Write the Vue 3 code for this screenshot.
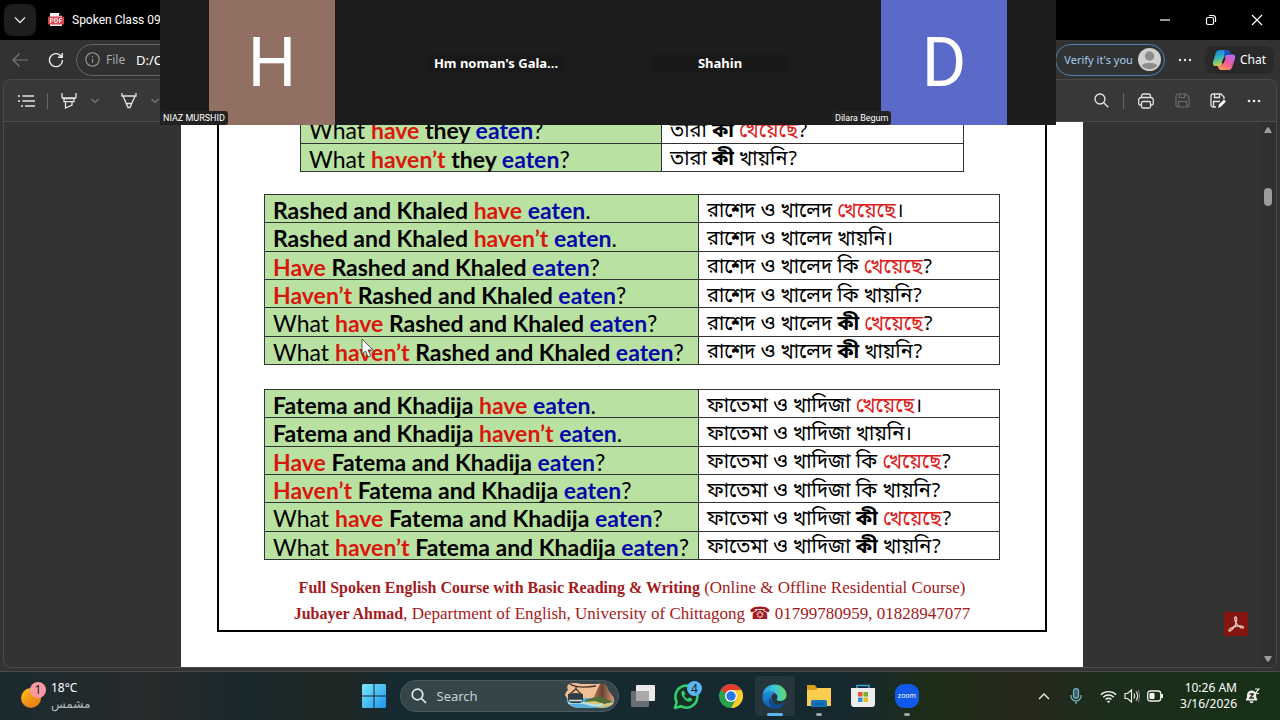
<script setup>
const tokens = {
  h: ['have', 'red'],
  H: ['Have', 'red'],
  n: ['haven’t', 'red'],
  N: ['Haven’t', 'red'],
  e: ['eaten', 'blue'],
}

function english(pattern, subject) {
  return pattern.split(' ').map((key) => {
    if (key === 'S') return { text: subject + ' ', tone: 'strong' }
    if (key === 'W') return { text: 'What ', tone: '' }
    if (key === '.' || key === '?') return { text: key, tone: '' }
    const [text, tone] = tokens[key]
    return { text: text + (key === 'e' ? '' : ' '), tone: 'strong ' + tone }
  })
}

function bangla(pattern, subject) {
  const words = { e: ['খেয়েছে', 'crimson'], n: ['খায়নি', ''], i: ['কি ', ''], I: ['কী ', 'strong'], '|': ['।', ''], '?': ['?', ''] }
  return [{ text: subject + ' ', tone: '' }].concat(
    pattern.split(' ').map((key) => ({ text: words[key][0], tone: words[key][1] }))
  )
}

const patterns = [
  ['S h e .', 'e |'],
  ['S n e .', 'n |'],
  ['H S e ?', 'i e ?'],
  ['N S e ?', 'i n ?'],
  ['W h S e ?', 'I e ?'],
  ['W n S e ?', 'I n ?'],
]

const build = (en, bn, list) => list.map(([a, b]) => ({ en: english(a, en), bn: bangla(b, bn) }))

const tables = [
  { id: 'they', kind: 'narrow', rows: build('they', 'তারা', patterns.slice(4)) },
  { id: 'rashed', kind: 'wide', rows: build('Rashed and Khaled', 'রাশেদ ও খালেদ', patterns) },
  { id: 'fatema', kind: 'wide', rows: build('Fatema and Khadija', 'ফাতেমা ও খাদিজা', patterns) },
]
</script>

<template>
  <div class="desktop">
    <header class="titlebar">
      <button class="tab-menu" aria-label="Tab actions">
        <svg width="14" height="10" viewBox="0 0 14 10"><path d="M2 2.5l5 5 5-5" fill="none" stroke="#ddd" stroke-width="1.4" /></svg>
      </button>
      <div class="tab">
        <svg width="16" height="16" viewBox="0 0 16 16">
          <path d="M2 1h9l3 3v10H2z" fill="#f4eeee" />
          <path d="M11 1l3 3h-3z" fill="#222" />
          <rect x="0" y="4.500" width="16" height="8" rx="1" fill="#dc4850" />
          <path d="M2.500 11V6.500h1.300a1.200 1.200 0 0 1 0 2.400H2.500M6.800 6.500V10.600h.8a2 2 0 0 0 0-4.100zM11.500 11V6.500H14M11.500 8.700h2" fill="none" stroke="#fff" stroke-width="1" />
        </svg>
        <span>Spoken Class 09</span>
      </div>
      <div class="window-controls">
        <button aria-label="Minimize"><svg width="12" height="12" viewBox="0 0 12 12"><path d="M1 6h10" stroke="#fff" stroke-width="1.200" /></svg></button>
        <button aria-label="Restore"><svg width="12" height="12" viewBox="0 0 12 12" fill="none" stroke="#fff" stroke-width="1.200"><rect x="1.500" y="3.500" width="7" height="7" rx="1.500" /><path d="M4 1.500h4a2.500 2.500 0 0 1 2.500 2.500v4" /></svg></button>
        <button aria-label="Close"><svg width="12" height="12" viewBox="0 0 12 12"><path d="M1 1l10 10M11 1L1 11" stroke="#fff" stroke-width="1.300" /></svg></button>
      </div>
    </header>

    <nav class="address-row">
      <button class="icon-btn" aria-label="Back">
        <svg width="18" height="16" viewBox="0 0 18 16" fill="none" stroke="#777" stroke-width="1.200"><path d="M17 8H2M8.500 1.500L2 8l6.500 6.500" /></svg>
      </button>
      <button class="icon-btn" aria-label="Reload">
        <svg width="16" height="16" viewBox="0 0 16 16" fill="none" stroke="#eee" stroke-width="1.400"><path d="M14.500 8A6.500 6.500 0 1 1 12.500 3.400L14 5M14.200 1v4.200H10" /></svg>
      </button>
      <div class="address">
        <svg width="15" height="15" viewBox="0 0 15 15" fill="none" stroke="#999" stroke-width="1.100"><circle cx="7.500" cy="7.500" r="6.700" /><path d="M7.500 6.700v4M7.500 4v1.300" /></svg>
        <label for="url">File</label>
        <input id="url" type="text" value="D:/C" />
      </div>
      <div class="profile-area">
        <button class="verify">
          <span>Verify it's you</span>
          <svg width="23" height="23" viewBox="0 0 23 23"><circle cx="11.500" cy="11.500" r="11.500" fill="#d2d0ce" /><circle cx="11.500" cy="8" r="4.700" fill="#8f8c8a" /><path d="M4 17.500c0-3.500 15-3.500 15 0-2 5-13 5-15 0z" fill="#8f8c8a" /></svg>
        </button>
        <button class="icon-btn more" aria-label="Settings and more">
          <svg width="14" height="4" viewBox="0 0 14 4" fill="#e8e8e8"><circle cx="2" cy="2" r="1.200" /><circle cx="7" cy="2" r="1.200" /><circle cx="12" cy="2" r="1.200" /></svg>
        </button>
        <button class="chat">
          <svg width="24" height="22" viewBox="0 0 24 22">
            <defs>
              <linearGradient id="cop-a" x1="0" y1="0" x2="0.300" y2="1"><stop offset="0" stop-color="#1976e0" /><stop offset="0.500" stop-color="#28b6c4" /><stop offset="1" stop-color="#c9d43b" /></linearGradient>
              <linearGradient id="cop-b" x1="0.800" y1="0" x2="0.200" y2="1"><stop offset="0" stop-color="#b96af0" /><stop offset="0.500" stop-color="#ee5aa0" /><stop offset="1" stop-color="#ff9a4a" /></linearGradient>
            </defs>
            <path d="M7 1h8c2 0 2.500 1.500 3 3l.8 2H15c-2 0-2.500 1-3 3l-2 6c-.5 1.500-1.500 2-3 2H3.500C1 17 .5 15 1 13L4 3.500C4.500 2 5.500 1 7 1z" fill="url(#cop-a)" />
            <path d="M17 21H9c-2 0-2.500-1.500-3-3l-.5-1.500H8c2 0 2.500-1 3-2.500l2-6c.5-1.500 1.500-2.500 3-2.500h4.500c2.500 0 3 2 2.500 4L20 18.500C19.500 20 18.500 21 17 21z" fill="url(#cop-b)" />
            <path d="M12.500 1H15c2 0 2.500 1.500 3 3l.8 2H15c-1.800 0-2.400.8-2.900 2.300z" fill="#1c4fc4" />
            <path d="M13 8.500l-2.500 5.500" stroke="#292929" stroke-width="2" />
          </svg>
          <span>Chat</span>
        </button>
      </div>
    </nav>

    <main class="viewer">
      <div class="pdf-bar">
        <div class="pdf-tools left">
          <button class="icon-btn" aria-label="Contents">
            <svg width="17" height="14" viewBox="0 0 17 14" fill="none" stroke="#e4e4e4" stroke-width="1.400"><path d="M4.500 2H16M4.500 7H17M7 12h10M0 2h2M0 7h2M3 12h2" /></svg>
          </button>
          <i class="rule"></i>
          <button class="icon-btn" aria-label="Highlight">
            <svg width="16" height="18" viewBox="0 0 16 18" fill="none" stroke="#e4e4e4" stroke-width="1.300"><path d="M1 1v3.500C1 6 2 6.500 3 6.500h10c1 0 2-.5 2-2V1M2 6h12M3 6.500v3.200h10V6.500M4.500 10v6l6.500-3v-3" /></svg>
          </button>
          <button class="icon-btn small" aria-label="Highlight colours"><svg width="8" height="6" viewBox="0 0 8 6"><path d="M.5 1L4 4.500 7.500 1" fill="none" stroke="#aaa" /></svg></button>
          <button class="icon-btn draw" aria-label="Draw">
            <svg width="16" height="18" viewBox="0 0 16 18" fill="none" stroke="#e4e4e4" stroke-width="1.300"><path d="M1 1v3h14V1M2 4l5 11.500h2L14 4M5.500 11.500h5" /></svg>
          </button>
          <button class="icon-btn small" aria-label="Pen options"><svg width="8" height="6" viewBox="0 0 8 6"><path d="M.5 1L4 4.500 7.500 1" fill="none" stroke="#aaa" /></svg></button>
        </div>
        <div class="pdf-tools">
          <button class="icon-btn" aria-label="Find">
            <svg width="15" height="15" viewBox="0 0 15 15" fill="none" stroke="#e4e4e4" stroke-width="1.300"><circle cx="6" cy="6" r="5" /><path d="M9.700 9.700L14.300 14.300" /></svg>
          </button>
          <i class="rule"></i>
          <button class="icon-btn" aria-label="Print">
            <svg width="16" height="16" viewBox="0 0 16 16" fill="none" stroke="#e4e4e4" stroke-width="1.300"><path d="M3.500 4.500V3A2 2 0 0 1 5.500 1h5a2 2 0 0 1 2 2v1.500M3.500 12H2.200Q.7 12 .7 10.500V7A2.500 2.500 0 0 1 3.200 4.500h9.600A2.500 2.500 0 0 1 15.300 7v3.500q0 1.500-1.500 1.500h-1.300" /><rect x="3.500" y="8.500" width="9" height="6.500" rx="1.500" /></svg>
          </button>
          <button class="icon-btn" aria-label="Save" disabled>
            <svg width="15" height="15" viewBox="0 0 15 15" fill="none" stroke="#6b6b6b" stroke-width="1.200"><path d="M3 1h8l3 3v8a2 2 0 0 1-2 2H3a2 2 0 0 1-2-2V3a2 2 0 0 1 2-2zM4.500 1v3.500h5V1M3.500 14V8.500h8V14" /></svg>
          </button>
          <button class="icon-btn" aria-label="Save as">
            <svg width="16" height="16" viewBox="0 0 16 16" fill="none" stroke="#e4e4e4" stroke-width="1.300"><path d="M6 14H3a2 2 0 0 1-2-2V3a2 2 0 0 1 2-2h8l3 3v2M4.500 1v3.500h5V1M3.500 14V8.500H10" /><path d="M8 15l1-3.500 5-5 2 2-5 5z" fill="#fff" stroke="none" /></svg>
          </button>
          <button class="icon-btn" aria-label="More options">
            <svg width="14" height="4" viewBox="0 0 14 4" fill="#e8e8e8"><circle cx="2" cy="2" r="1.300" /><circle cx="7" cy="2" r="1.300" /><circle cx="12" cy="2" r="1.300" /></svg>
          </button>
        </div>
      </div>

      <div class="pdf-body">
        <div class="canvas">
          <article class="page">
            <div class="frame">
              <table v-for="t in tables" :key="t.id" :class="t.kind">
                <tbody>
                  <tr v-for="(row, i) in t.rows" :key="i">
                    <td class="en"><span v-for="(s, j) in row.en" :key="j" :class="s.tone">{{ s.text }}</span></td>
                    <td class="bn" lang="bn"><span v-for="(s, j) in row.bn" :key="j" :class="s.tone">{{ s.text }}</span></td>
                  </tr>
                </tbody>
              </table>
              <footer class="credits">
                <p><b>Full Spoken English Course with Basic Reading &amp; Writing</b> (Online &amp; Offline Residential Course)</p>
                <p><b>Jubayer Ahmad</b>, Department of English, University of Chittagong <span class="phone">☎</span> 01799780959, 01828947077</p>
              </footer>
            </div>
          </article>
          <button class="acrobat" aria-label="Open in Acrobat">
            <svg width="24" height="24" viewBox="0 0 24 24"><rect width="24" height="24" rx="1" fill="#85150f" /><path d="M11.500 5c1.800 0 1.200 4 0 7.500C9.500 17 6 20 5 18.800c-.8-1.500 4-4.300 8-4.800 3.500-.5 7 .2 6.500 1.500-.8 1.700-5-.8-7-4C10.500 8.500 10 5 11.500 5z" fill="none" stroke="#e5c9c2" stroke-width="1.300" /></svg>
          </button>
        </div>
        <div class="scrollbar">
          <svg width="10" height="8" viewBox="0 0 10 8"><path d="M1 7L4 1.500h2L9 7z" fill="#9b9b9b" /></svg>
          <i class="thumb"></i>
          <svg class="down" width="10" height="8" viewBox="0 0 10 8"><path d="M1 1l3 5.500h2L9 1z" fill="#9b9b9b" /></svg>
        </div>
      </div>
    </main>

    <footer class="taskbar">
      <button class="weather">
        <svg width="26" height="28" viewBox="0 0 26 28">
          <defs><linearGradient id="sun" x1="0" y1="0" x2="0.700" y2="1"><stop offset="0" stop-color="#ffc01e" /><stop offset="1" stop-color="#ea7a12" /></linearGradient></defs>
          <circle cx="10" cy="16" r="10" fill="url(#sun)" /><circle cx="17" cy="8" r="8" fill="#f99aa2" />
          <text x="17" y="12" text-anchor="middle" class="badge-text">1</text>
        </svg>
        <span class="weather-text"><span>18°C</span><span class="condition" lang="ar">مشمس</span></span>
      </button>

      <div class="apps">
        <button class="app" aria-label="Start">
          <svg width="24" height="24" viewBox="0 0 24 24">
            <defs><linearGradient id="win" x1="0" y1="0" x2="1" y2="1"><stop offset="0" stop-color="#7de6fb" /><stop offset="1" stop-color="#1b95ee" /></linearGradient></defs>
            <path d="M1 0h10.500v11.500H0V1zM12.500 0H23l1 1v10.500H12.500zM0 12.500h11.500V24H1l-1-1zM12.500 12.500H24V23l-1 1H12.500z" fill="url(#win)" />
          </svg>
        </button>
        <div class="search">
          <svg width="16" height="16" viewBox="0 0 16 16" fill="none" stroke="#e6eaea" stroke-width="1.700"><circle cx="6.500" cy="6.500" r="5.300" /><path d="M10.500 10.500L15 15" /></svg>
          <input type="text" placeholder="Search" aria-label="Search" />
          <svg width="50" height="26" viewBox="0 0 50 26">
            <defs>
              <clipPath id="scene"><path d="M4 1q5-2 12 0h16q8-1 10 3 1 4 4 7 4 4 3 8-2 5-10 6H14Q4 24 2 18 2 14 0 12 1 8 3 7 1 3 4 1z" /></clipPath>
              <linearGradient id="rock" x1="0" y1="0" x2="1" y2="0"><stop offset="0" stop-color="#c27a4d" /><stop offset="0.450" stop-color="#694238" /><stop offset="1" stop-color="#e3a36b" /></linearGradient>
            </defs>
            <g clip-path="url(#scene)">
              <rect width="50" height="26" fill="#efc094" />
              <path d="M0 15h50v11H0z" fill="#58b0dc" />
              <path d="M35 1h7l8 17H27z" fill="url(#rock)" />
              <path d="M20 17q10-3 14-4l14 6-10 3-18-2z" fill="#526e35" />
              <path d="M18 19l12-1 9 3 9-2v3l-12 3-8-3z" fill="#d7c276" />
              <path d="M0 21q12-3 23 0 8 3 15 0" fill="none" stroke="#b8e1ee" stroke-width="2" />
            </g>
            <path d="M5 1q8 5 26 2M11 3v3M5 11l6-5 5 5" fill="none" stroke="#4e302b" stroke-width="1.300" />
            <path d="M3 11q7-2 15 0v6q-1 3-4 3H7q-3 0-4-3z" fill="#303e43" /><path d="M4 17.500h13" stroke="#dbe3df" stroke-width="1.500" />
          </svg>
        </div>
        <button class="app" aria-label="Task view">
          <svg width="26" height="24" viewBox="0 0 26 24"><rect x="6" y="1" width="19" height="16" rx="1" fill="#e9e9ea" /><rect x="1" y="7" width="18" height="16" rx="1" fill="#777b7e" fill-opacity="0.850" /><path d="M6 7h13v10H6z" fill="#a9a9ab" /></svg>
        </button>
        <button class="app" aria-label="WhatsApp">
          <svg width="30" height="30" viewBox="0 0 30 30">
            <path d="M3 27l1.700-6.200A11 11 0 1 1 9 25.200z" fill="#173027" stroke="#31cf69" stroke-width="2.600" stroke-linejoin="round" />
            <path d="M9.500 11c1-2 2.500-1.600 3 0l.8 1.800-1.200 1.600c.8 1.700 2 2.700 3.600 3.500l1.500-1.500 2.500 1.200c1 .6.200 2.400-1.200 3-3.800 1.200-10-5.300-9-9.600z" fill="#31cf69" />
            <circle cx="22.500" cy="7.500" r="7.500" fill="#5cb6f1" /><text x="22.500" y="12" text-anchor="middle" class="badge-text">4</text>
          </svg>
        </button>
        <button class="app" aria-label="Chrome">
          <svg width="24" height="24" viewBox="0 0 24 24"><circle cx="12" cy="12" r="12" fill="#2aa24c" /><path d="M12 12L1.600 6A12 12 0 0 1 22.400 6H12z" fill="#e03e31" /><path d="M12 6h10.400A12 12 0 0 1 12 24l5.200-9z" fill="#fccb2e" /><circle cx="12" cy="12" r="6" fill="#fff" /><circle cx="12" cy="12" r="4.700" fill="#2c75e6" /></svg>
        </button>
        <button class="app active" aria-label="Edge">
          <svg width="25" height="25" viewBox="0 0 25 25">
            <defs>
              <linearGradient id="edge-a" x1="0" y1="0.500" x2="1" y2="0.400"><stop offset="0" stop-color="#229ade" /><stop offset="0.500" stop-color="#3cc5de" /><stop offset="1" stop-color="#64d95b" /></linearGradient>
              <linearGradient id="edge-b" x1="0" y1="0" x2="0" y2="1"><stop offset="0" stop-color="#2193dc" /><stop offset="1" stop-color="#0f59ac" /></linearGradient>
            </defs>
            <path d="M.5 11C1.500 4.500 6.500.5 12.500.5 19.500.5 24.500 5.500 24.500 11c0 4-3 6-6.500 6-3 0-4-1-3-2.200C18 9.500 7 4 .5 11z" fill="url(#edge-a)" />
            <path d="M.5 12C2 7 10 5.500 13.500 9c-3.500 0-5 4-3.500 7.500C12 22 18 23 22.500 18.500 20 23 16 24.500 12.500 24.500 5 24.500-.5 18.500.5 12z" fill="url(#edge-b)" />
            <path d="M8.500 13c0 6 6 9.500 13.500 6-3 5-9 6-12 4.500C6 21 6.500 15 8.500 13z" fill="#114a91" />
          </svg>
          <i class="bar"></i>
        </button>
        <button class="app" aria-label="File Explorer">
          <svg width="26" height="24" viewBox="0 0 26 24"><path d="M1 1h8l2 3h13v6H1z" fill="#dc9d19" /><path d="M1 6h9l2-2h13v18H1z" fill="#fccd4e" /><path d="M5 23v-5q0-2 2-2h12q2 0 2 2v5z" fill="#1475bd" /><path d="M8 20h10" stroke="#095590" stroke-width="1.200" /></svg>
          <i class="dot"></i>
        </button>
        <button class="app" aria-label="Microsoft Store">
          <svg width="24" height="26" viewBox="0 0 24 26"><path d="M6 6V2.500h12V6" fill="none" stroke="#3ba5de" stroke-width="1.500" /><path d="M0 5h24v16q0 3-3 3H3q-3 0-3-3z" fill="#ededed" /><path d="M7 9h4.500v4.500H7z" fill="#e95432" /><path d="M12.500 9H17v4.500h-4.500z" fill="#7cad2a" /><path d="M7 14.500h4.500V19H7z" fill="#2d94d9" /><path d="M12.500 14.500H17V19h-4.500z" fill="#eeb91d" /></svg>
        </button>
        <button class="app" aria-label="Zoom">
          <svg width="24" height="24" viewBox="0 0 24 24"><rect width="24" height="24" rx="9" fill="#1159e8" /><text x="12" y="14" text-anchor="middle" class="zoom-text">zoom</text></svg>
          <i class="dot"></i>
        </button>
      </div>

      <div class="tray">
        <button class="tray-btn" aria-label="Show hidden icons"><svg width="12" height="8" viewBox="0 0 12 8"><path d="M1 7l5-5 5 5" fill="none" stroke="#eee" stroke-width="1.400" /></svg></button>
        <button class="tray-btn" aria-label="Microphone"><svg width="12" height="16" viewBox="0 0 12 16" fill="none" stroke="#75b9cd" stroke-width="1.200"><rect x="3.500" y=".7" width="5" height="9.500" rx="2.500" fill="#42606a" /><path d="M1 7v1a5 5 0 0 0 10 0V7M6 13v3" /></svg></button>
        <button class="quick" aria-label="Network, volume and battery">
          <svg width="17" height="13" viewBox="0 0 17 13" fill="none" stroke="#eee" stroke-width="1.300"><path d="M.8 4.700a11 11 0 0 1 15.400 0M3.200 7.200a7.500 7.500 0 0 1 10.600 0M5.500 9.500a4.200 4.200 0 0 1 6 0" /><circle cx="8.500" cy="11.600" r="1.200" fill="#eee" stroke="none" /></svg>
          <svg width="16" height="14" viewBox="0 0 16 14" fill="none" stroke="#eee" stroke-width="1.200"><path d="M1 4.500h2.500L7.500 1v12L3.500 9.500H1zM9.800 4.500q1.600 2.500 0 5M12 2.500q3.400 4.500 0 9" /><path d="M14 1q3 6 0 12" stroke="#777" /></svg>
          <svg width="17" height="12" viewBox="0 0 17 12"><rect x=".7" y="1" width="13" height="10" rx="2.500" fill="none" stroke="#eee" stroke-width="1.300" /><rect x="2.500" y="3" width="5" height="6" rx="1" fill="#fff" /><path d="M15 4v4" stroke="#eee" stroke-width="2" /></svg>
        </button>
        <button class="clock"><span>10:26 AM</span><span>3/16/2026</span></button>
        <button aria-label="Notifications">
          <svg width="15" height="16" viewBox="0 0 15 16"><path d="M1 12.500V11l1-1.500V7a4.600 4.600 0 0 1 9.200 0v2.500l1 1.500v1.500zM4.500 13.200h4q-.5 2-2 2t-2-2z" fill="#eee" /><path d="M4.500 6h4L5 10h4" fill="none" stroke="#24331f" stroke-width="1.300" /><path d="M10 1h4l-4 4.500h4" fill="none" stroke="#eee" stroke-width="1.200" /></svg>
        </button>
      </div>
    </footer>

    <section class="meeting" aria-label="Meeting participants">
      <div class="tile"><div class="avatar brown">H</div><span class="tag">NIAZ MURSHID</span></div>
      <div class="tile"><span class="name">Hm noman's Gala...</span></div>
      <div class="tile"><span class="name">Shahin</span></div>
      <div class="tile"><div class="avatar indigo">D</div><span class="tag">Dilara Begum</span></div>
    </section>

    <svg class="cursor" width="13" height="20" viewBox="0 0 13 20"><path d="M1 1v15l3.500-3 2.500 6 2.700-1.200L7.200 12H12z" fill="#fff" stroke="#333" stroke-width="0.800" /></svg>
  </div>
</template>

<style>
body { background: #000; }
</style>

<style scoped>
.desktop {
  position: relative;
  display: flex;
  flex-direction: column;
  height: 100vh;
  overflow: hidden;
  background: #333;
  color: #fff;
  font: 12px/16px "Noto Sans", "DejaVu Sans", sans-serif;
}
.desktop *, .desktop { box-sizing: border-box; }
button { padding: 0; border: 0; background: none; color: inherit; font: inherit; display: flex; align-items: center; justify-content: center; }
input { min-width: 0; padding: 0; border: 0; background: none; color: inherit; font: inherit; }
svg { flex: none; display: block; }

.titlebar { flex: none; display: flex; align-items: center; height: 40px; padding-left: 4px; background: #000; }
.tab-menu { width: 32px; height: 32px; border-radius: 8px; background: #1f1f1f; }
.tab { display: flex; align-items: center; gap: 8px; margin-left: 12px; font-family: Roboto, sans-serif; white-space: nowrap; }
.window-controls { display: flex; margin-left: auto; }
.window-controls button { width: 46px; height: 40px; }

.address-row { flex: none; display: flex; align-items: center; height: 39px; padding: 0 6px 0 2px; background: #323232; }
.icon-btn { width: 36px; height: 32px; }
.address { display: flex; align-items: center; gap: 6px; width: 220px; height: 32px; margin-left: 2px; padding-left: 8px; border: 1px solid #666; border-radius: 16px; background: #303030; }
.address label { width: 24px; color: #aaa; }
.address input { width: 60px; font-size: 13px; }
.profile-area { display: flex; align-items: center; margin-left: auto; }
.verify { gap: 5px; height: 32px; padding: 0 3px 0 8px; border: 1px solid #5482b8; border-radius: 16px; background: #303234; color: #a5cdf0; font-size: 11px; }
.more { width: 40px; }
.chat { gap: 4px; height: 28px; padding: 0 8px 0 7px; border-radius: 8px; background: #292929; }

.viewer { flex: 1; display: flex; flex-direction: column; min-height: 0; margin: 0 3px 3px; border: 1px solid #4a4a4a; border-radius: 8px; overflow: hidden; background: #333; }
.pdf-bar { flex: none; display: flex; justify-content: space-between; align-items: center; height: 42px; padding: 0 4px; border-bottom: 1px solid #4a4a4a; background: #383838; }
.pdf-tools { display: flex; align-items: center; }
.rule { width: 1px; height: 16px; margin: 0 4px; background: #666; }
.left .rule { margin: 0 3px; }
.icon-btn.small { width: 16px; }
.icon-btn.draw { margin-left: 8px; }

.pdf-body { flex: 1; display: flex; min-height: 0; }
.canvas { position: relative; flex: 1; display: flex; justify-content: center; min-width: 0; overflow: hidden; }
.page { width: 100%; max-width: 902px; padding: 0 36px 35px; background: #fff; color: #000; }
.frame { height: 100%; border: solid #000; border-width: 0 2px 2px; overflow: hidden; }
.scrollbar { flex: none; display: flex; flex-direction: column; align-items: center; width: 16px; padding: 4px 0; background: #303030; }
.thumb { width: 8px; height: 18px; margin-top: 54px; border-radius: 4px; background: #9b9b9b; }
.scrollbar .down { margin-top: auto; }
.acrobat { position: absolute; right: 12px; bottom: 31px; }

table { margin: 0 auto; border-collapse: collapse; table-layout: fixed; background: #fff; }
td { height: 28px; border: 1px solid #333; white-space: nowrap; vertical-align: middle; }
.narrow { width: 664px; height: 58px; margin-top: -8px; }
.wide { width: 736px; height: 171px; margin-top: 22px; }
.wide + .wide { margin-top: 24px; }
.narrow .en { width: 361px; }
.wide .en { width: 434px; }
.en { padding: 3px 8px 0; background: #b9e2a2; font: 23px/24px Lato, "Open Sans", sans-serif; }
.bn { padding: 6px 8px 0; font: 20px/20px "Noto Sans Bengali", "Noto Sans", sans-serif; }
.strong { font-weight: 700; }
.red { color: #d9170d; }
.blue { color: #0508a8; }
.crimson { color: #dc2020; }
.credits { padding-top: 15px; text-align: center; color: #a51920; font: 17px/26px "Liberation Serif", serif; white-space: nowrap; }
.credits p { margin: 0; }
.credits b { font-size: 16px; }
.phone { font-family: "DejaVu Sans", sans-serif; line-height: 20px; }

.taskbar {
  flex: none;
  display: grid;
  grid-template-columns: 1fr auto 1fr;
  align-items: center;
  height: 49px;
  border-top: 1px solid #4a4d4d;
  background: linear-gradient(90deg, #1a2b2f 0%, #282a2b 12%, #18282d 19%, #202722 26%, #162a31 31%, #152830 66%, #1f2e17 73%, #27281c 80%, #1b2e1b 87%, #163016 100%);
}
.weather { justify-self: start; gap: 4px; padding-left: 21px; text-align: left; }
.weather-text { display: flex; flex-direction: column; align-items: flex-start; }
.condition { color: #b5bcbc; }
.badge-text { font: 12px "Noto Sans", sans-serif; fill: #17252a; }
.zoom-text { font: 7px "Noto Sans", sans-serif; fill: #fff; }
.apps { display: flex; align-items: center; }
.app { position: relative; width: 44px; height: 40px; }
.app.active { width: 40px; margin: 0 2px; border-radius: 4px; background: #25363d; }
.bar, .dot { position: absolute; bottom: 0; left: 50%; height: 3px; border-radius: 2px; transform: translateX(-50%); }
.bar { width: 16px; background: #5cb6ea; }
.dot { width: 6px; background: #a0a4a4; }
.search { display: flex; align-items: center; gap: 10px; width: 219px; height: 32px; margin: 0 2px 0 4px; padding: 0 3px 0 10px; border: 1px solid #4a5a5f; border-radius: 16px; background: #35464b; }
.search input { flex: 1; font-size: 13px; }
.search input::placeholder { color: #c8d0d2; opacity: 1; }
.tray { justify-self: end; display: flex; align-items: center; padding-right: 20px; }
.tray-btn { width: 32px; }
.quick { gap: 7px; margin: 0 16px 0 8px; }
.clock { flex-direction: column; align-items: flex-end; margin-right: 8px; }

.meeting { position: absolute; top: 0; left: 12.5%; right: 17.5%; display: grid; grid-template-columns: repeat(4, 1fr); height: 125px; background: #1c1c1c; }
.tile { position: relative; display: flex; align-items: center; justify-content: center; }
.avatar { display: flex; align-items: center; justify-content: center; width: 126px; height: 125px; font: 68px/80px Roboto, sans-serif; }
.brown { background: #917063; }
.indigo { background: #5b69c9; }
.tag { position: absolute; left: 0; bottom: 0; padding: 0 3px; border-radius: 3px; background: #222; font: 9px/14px Roboto, sans-serif; }
.name { min-width: 134px; background: #191919; text-align: center; font-size: 13px; font-weight: 700; line-height: 18px; }
.cursor { position: absolute; left: 361px; top: 338px; }
</style>
